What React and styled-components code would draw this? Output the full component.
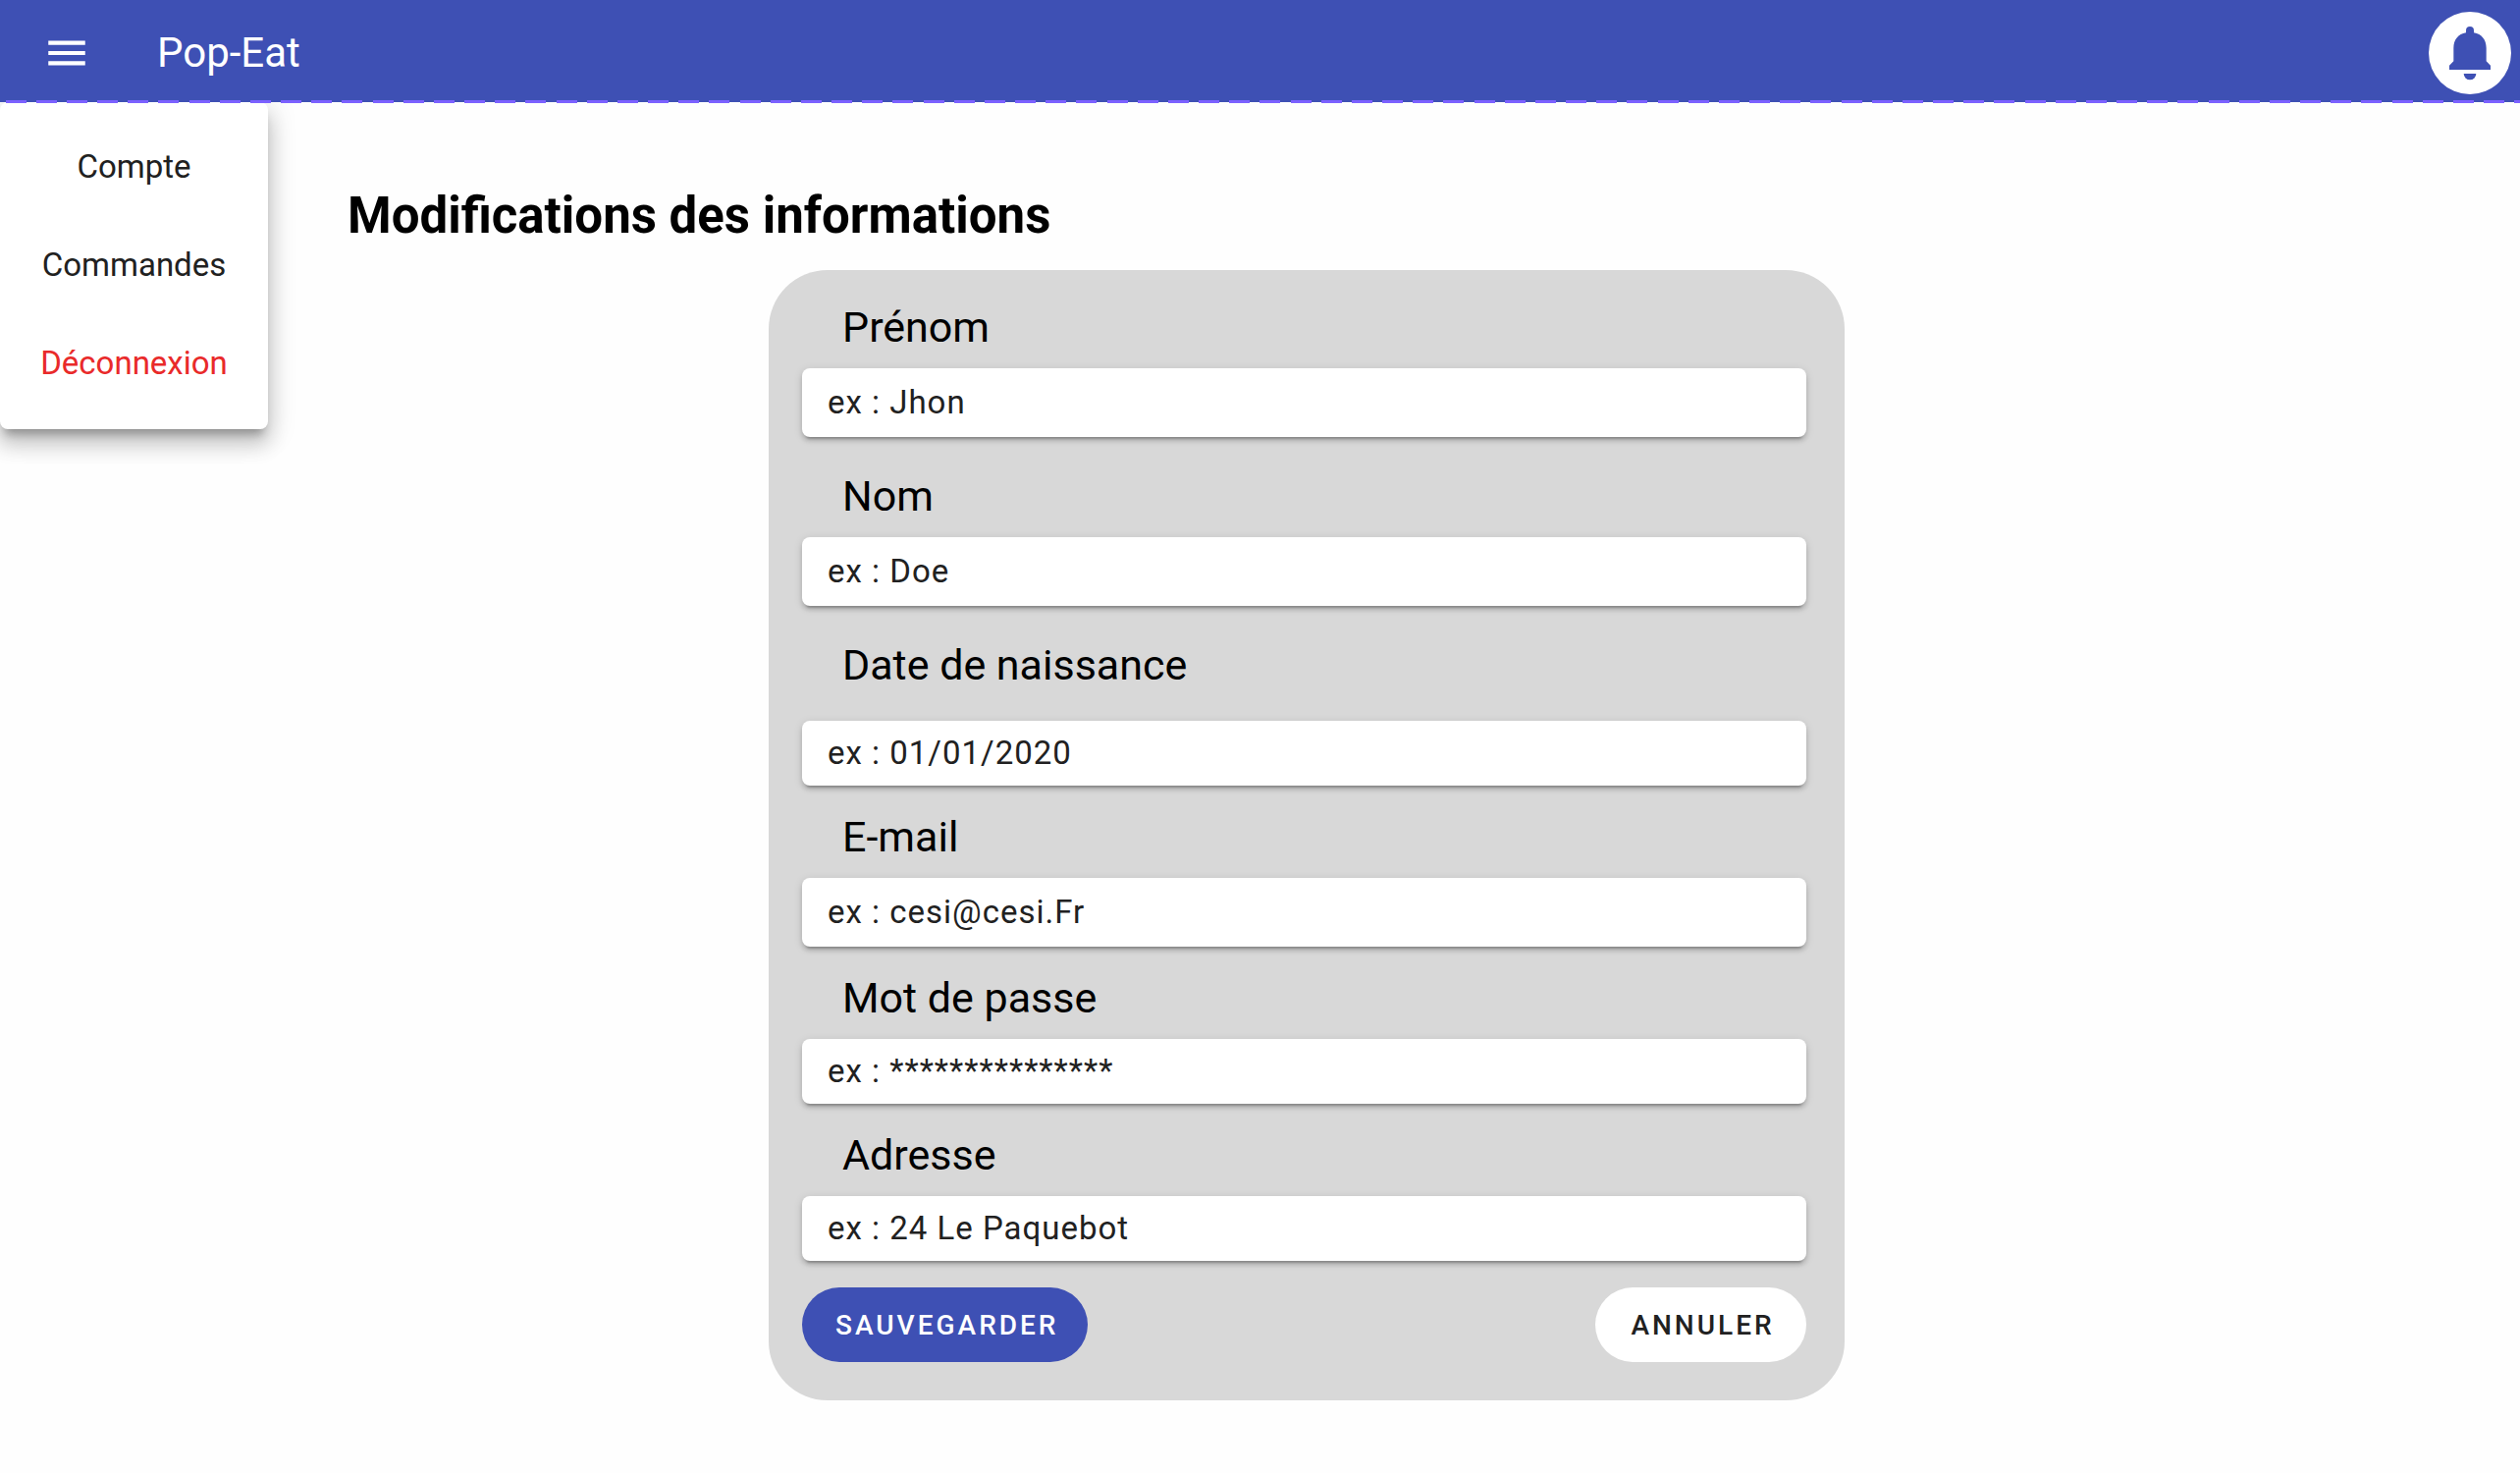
import React from "react";
import styled, { createGlobalStyle } from "styled-components";

const GlobalStyle = createGlobalStyle`
  *, *::before, *::after { box-sizing: border-box; }
  body {
    margin: 0;
    background: #fefefe;
    color: #000;
    font-family: Roboto, "Liberation Sans", sans-serif;
  }
`;

const Header = styled.header`
  position: relative;
  z-index: 2;
  display: flex;
  align-items: center;
  height: 104px;
  padding: 4px 9px 0 43px;
  background: #3e50b4;
  color: #fff;
`;

const MenuButton = styled.button`
  display: flex;
  margin: 0 67px 0 0;
  padding: 0;
  border: 0;
  background: none;
  color: inherit;
  cursor: pointer;
`;

const Brand = styled.span`
  font-size: 42px;
  line-height: 50px;
`;

const BellButton = styled.button`
  display: flex;
  margin: 0 0 0 auto;
  padding: 0;
  border: 0;
  border-radius: 50%;
  background: #fff;
  color: #3e50b4;
  cursor: pointer;
`;

const DashedRule = styled.svg`
  position: absolute;
  left: 0;
  bottom: -1px;
  width: 100%;
  height: 3px;
`;

const Body = styled.div`
  display: flex;
  align-items: flex-start;
`;

const SideMenu = styled.nav`
  display: flex;
  flex: none;
  flex-direction: column;
  width: 273px;
  padding: 16px 0 17px;
  border-radius: 8px;
  background: #fff;
  box-shadow:
    0 10px 10px -5px rgba(0, 0, 0, 0.28),
    0 16px 20px 2px rgba(0, 0, 0, 0.14),
    0 6px 28px 4px rgba(0, 0, 0, 0.12);
`;

const SideLink = styled.a`
  color: ${(p) => (p.$danger ? "#e92a2a" : "#212121")};
  font-size: 33px;
  line-height: 100px;
  text-align: center;
  text-decoration: none;
`;

const Main = styled.main`
  flex: 1;
  min-width: 0;
  padding: 86px 259px 75px 81px;
`;

const Title = styled.h1`
  margin: 0 0 25px;
  font-size: 51px;
  font-weight: 700;
  line-height: 60px;
`;

const Card = styled.form`
  display: flex;
  flex-direction: column;
  width: 100%;
  max-width: 1096px;
  margin: 0 auto;
  padding: 33px 39px 39px 34px;
  border-radius: 60px;
  background: #d8d8d8;
`;

const Field = styled.div`
  display: flex;
  flex-direction: column;
  gap: ${(p) => (p.$spread ? 32 : 17)}px;
  margin-bottom: ${(p) => (p.$tall && !p.$tight ? 35 : 27)}px;
`;

const Label = styled.label`
  padding-left: 41px;
  font-size: 43px;
  line-height: 50px;
`;

const TextInput = styled.input`
  width: 100%;
  height: ${(p) => (p.$tall ? 70 : 66)}px;
  padding: 0 26px 2px;
  border: 0;
  border-radius: 8px;
  background: #fff;
  box-shadow:
    0 6px 2px -4px rgba(0, 0, 0, 0.2),
    0 4px 4px rgba(0, 0, 0, 0.14),
    0 2px 10px rgba(0, 0, 0, 0.12);
  color: #212121;
  font-family: inherit;
  font-size: 33px;
  letter-spacing: 1px;

  &::placeholder {
    color: #212121;
    opacity: 1;
  }
`;

const Actions = styled.div`
  display: flex;
  justify-content: space-between;
`;

const ActionButton = styled.button`
  min-width: 215px;
  height: 76px;
  padding: 0 30px 0 34px;
  border: 0;
  border-radius: 38px;
  background: ${(p) => (p.$primary ? "#3e50b4" : "#fff")};
  color: ${(p) => (p.$primary ? "#fff" : "#212121")};
  font-family: inherit;
  font-size: 28px;
  font-weight: 500;
  letter-spacing: 3px;
  text-transform: uppercase;
  cursor: pointer;
`;

const MenuIcon = () => (
  <svg width="50" height="50" viewBox="0 0 24 24" fill="currentColor" aria-hidden="true">
    <path d="M3 18h18v-2H3v2zm0-5h18v-2H3v2zm0-7v2h18V6H3z" />
  </svg>
);

const BellIcon = () => (
  <svg width="84" height="84" viewBox="0 0 252 252" fill="currentColor" aria-hidden="true">
    <path d="M114 64V57a12 12 0 0 1 24 0V64C162 68 176 86 176 110V151L189 164V177H63V164L76 151V110C76 86 90 68 114 64Z" />
    <path d="M107 189H145A19 19 0 0 1 107 189Z" />
  </svg>
);

const links = [
  { label: "Compte" },
  { label: "Commandes" },
  { label: "Déconnexion", danger: true },
];

const fields = [
  { id: "prenom", label: "Prénom", hint: "ex : Jhon", tall: true },
  { id: "nom", label: "Nom", hint: "ex : Doe", tall: true },
  { id: "naissance", label: "Date de naissance", hint: "ex : 01/01/2020", spread: true },
  { id: "email", label: "E-mail", hint: "ex : cesi@cesi.Fr", type: "email", tall: true, tight: true },
  { id: "passe", label: "Mot de passe", hint: "ex : ***************", type: "password" },
  { id: "adresse", label: "Adresse", hint: "ex : 24 Le Paquebot" },
];

export default function App() {
  return (
    <>
      <GlobalStyle />
      <Header>
        <MenuButton type="button" aria-label="Menu">
          <MenuIcon />
        </MenuButton>
        <Brand>Pop-Eat</Brand>
        <BellButton type="button" aria-label="Notifications">
          <BellIcon />
        </BellButton>
        <DashedRule aria-hidden="true">
          <line
            x1="6"
            y1="1.5"
            x2="100%"
            y2="1.5"
            stroke="#7b61ff"
            strokeWidth="3"
            strokeDasharray="21 10 21 10 21 10 21 10 21 10 21 11"
          />
        </DashedRule>
      </Header>
      <Body>
        <SideMenu>
          {links.map((l) => (
            <SideLink key={l.label} href="#" $danger={l.danger}>
              {l.label}
            </SideLink>
          ))}
        </SideMenu>
        <Main>
          <Title>Modifications des informations</Title>
          <Card>
            {fields.map((f) => (
              <Field key={f.id} $tall={f.tall} $tight={f.tight} $spread={f.spread}>
                <Label htmlFor={f.id}>{f.label}</Label>
                <TextInput id={f.id} type={f.type || "text"} placeholder={f.hint} $tall={f.tall} />
              </Field>
            ))}
            <Actions>
              <ActionButton type="submit" $primary>
                Sauvegarder
              </ActionButton>
              <ActionButton type="reset">Annuler</ActionButton>
            </Actions>
          </Card>
        </Main>
      </Body>
    </>
  );
}
